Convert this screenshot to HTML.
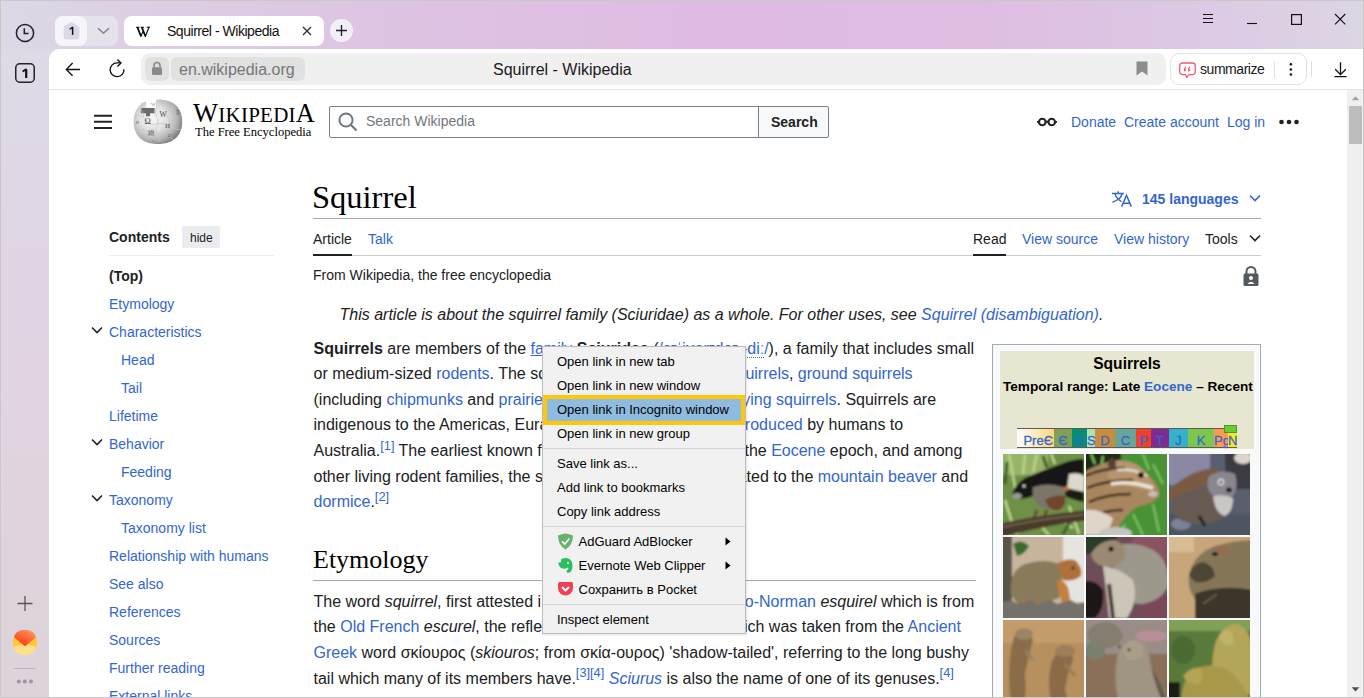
<!DOCTYPE html>
<html><head><meta charset="utf-8">
<style>
*{box-sizing:border-box;margin:0;padding:0}
html,body{width:1364px;height:698px;overflow:hidden;background:#fff}
body{position:relative;font-family:"Liberation Sans",sans-serif;color:#202122}
.a{position:absolute;white-space:nowrap}
#bg{position:absolute;left:0;top:0;width:1364px;height:698px;
 background:linear-gradient(90deg,#dcd9e5 0%,#dccde4 12%,#dec3e3 30%,#dfbbe3 52%,#dfbde3 72%,#dcc9e4 88%,#dcd6e4 100%)}
#side{position:absolute;left:0;top:49px;width:49px;height:649px;
 background:linear-gradient(180deg,#dedae6 0%,#e0d5e2 40%,#dfd4dd 75%,#ddd3da 100%)}
#tool{position:absolute;left:49px;top:49px;width:1315px;height:41px;background:#fff;border-top-left-radius:10px;border-bottom:1px solid #e3e3e3}
#page{position:absolute;left:49px;top:90px;width:1315px;height:608px;background:#fff;overflow:hidden}
.lk{color:#3366cc}
.sb{position:absolute;left:1347px;top:90px;width:16px;height:608px;background:#f0f0f0}
#frame{position:absolute;left:0;top:0;width:1364px;height:698px;border:1px solid #c8c8c8;pointer-events:none}
.toc{position:absolute;font-size:14px;color:#3366cc;line-height:20px}
.p16{position:absolute;font-size:16px;line-height:25.6px;white-space:nowrap;color:#202122}
sup{font-size:12.8px;line-height:1;vertical-align:super;position:relative;top:0}
.menu{position:absolute;left:542px;top:346px;width:204px;height:288px;background:#f1f1f1;border:1px solid #bcbcbc;box-shadow:1px 1px 2px rgba(0,0,0,.12)}
.mi{position:absolute;left:14px;font-size:13px;color:#000;white-space:nowrap;line-height:16px}
.sep{position:absolute;left:0;width:202px;height:1px;background:#d4d4d4}
</style></head>
<body>
<div id="bg"></div>
<div id="side"></div>
<!-- sidebar icons -->
<svg class="a" style="left:14px;top:22px" width="22" height="22" viewBox="0 0 22 22"><circle cx="11" cy="11" r="8.6" fill="none" stroke="#222" stroke-width="1.5"/><path d="M10.3 6.2V11.6H14.6" fill="none" stroke="#222" stroke-width="1.5"/></svg>
<svg class="a" style="left:14px;top:62px" width="22" height="22" viewBox="0 0 22 22"><rect x="1.75" y="1.75" width="18.5" height="18.5" rx="4" fill="none" stroke="#222" stroke-width="1.5"/><path d="M12.2 7.6V16" stroke="#111" stroke-width="2.2"/><path d="M8.6 9.6L12.6 7" stroke="#111" stroke-width="1.8"/></svg>
<svg class="a" style="left:15px;top:594px" width="20" height="20" viewBox="0 0 20 20"><path d="M10 2V17M2.5 9.5H17.5" stroke="#555" stroke-width="1.3"/></svg>
<svg class="a" style="left:12px;top:630px" width="26" height="26" viewBox="0 0 26 26"><defs><linearGradient id="yr" x1="1" y1="0" x2="0.3" y2="1"><stop offset="0" stop-color="#ffa070"/><stop offset="1" stop-color="#ff3a0a"/></linearGradient></defs><circle cx="13" cy="13" r="12.1" fill="#ffc93a"/><path d="M1.6 17.2L13 12.8L24.4 17.2A12.1 12.1 0 0 1 1.6 17.2Z" fill="#ffe08a"/><path d="M1.9 6.9A12.1 12.1 0 0 1 24.1 6.9L14.2 15.6Q13 16.5 11.8 15.6Z" fill="url(#yr)"/></svg>
<div class="a" style="left:14px;top:668px;width:22px;height:1px;background:#b9b3bb"></div>
<svg class="a" style="left:15px;top:678px" width="20" height="8" viewBox="0 0 20 8"><circle cx="3.8" cy="3.6" r="2" fill="#9c979e"/><circle cx="9.8" cy="3.6" r="2" fill="#9c979e"/><circle cx="16" cy="3.6" r="2" fill="#9c979e"/></svg>

<!-- tab strip -->
<div class="a" style="left:55px;top:16px;width:63px;height:30px;border-radius:8px;background:#e6e2ec"></div>
<div class="a" style="left:55px;top:16px;width:32px;height:30px;border-radius:8px;background:#f6f5f9"></div>
<svg class="a" style="left:63px;top:21px" width="17" height="20" viewBox="0 0 17 20"><path d="M8.5 1.2Q9.3 1.2 10 1.7L15.6 5.2Q16.4 5.8 16.4 6.8V15.6A3 3 0 0 1 13.4 18.6H3.6A3 3 0 0 1 0.6 15.6V6.8Q0.6 5.8 1.4 5.2L7 1.7Q7.7 1.2 8.5 1.2Z" fill="#dcd8e6"/><path d="M9.6 6.2V13.9" stroke="#111" stroke-width="1.5"/><path d="M6.6 8.2L9.9 6.1" stroke="#111" stroke-width="1.3"/></svg>
<svg class="a" style="left:97px;top:27px" width="13" height="8" viewBox="0 0 13 8"><path d="M1 1.2L6.5 6.2L12 1.2" fill="none" stroke="#777" stroke-width="1.3"/></svg>
<div class="a" style="left:124px;top:16px;width:200px;height:30px;border-radius:8px;background:#fff"></div>
<svg class="a" style="left:135px;top:26px" width="16" height="11" viewBox="0 0 16 11"><path d="M1 1.3H4.6M5.8 1.3H9M11.6 1.3H15.2M2.2 1.3L6 10.3L8.2 4.8M6.7 1.3L10.4 10.3L14 1.3" fill="none" stroke="#111" stroke-width="1.1"/><path d="M2.4 1.3L6 10.3M6.9 1.3L10.4 10.3" fill="none" stroke="#111" stroke-width="1.7"/></svg>
<div class="a" style="left:167px;top:23.2px;font-size:14px;line-height:16px;color:#111;letter-spacing:-0.47px">Squirrel - Wikipedia</div>
<svg class="a" style="left:302px;top:26px" width="10" height="10" viewBox="0 0 10 10"><path d="M1 1L9 9M9 1L1 9" stroke="#2a2a2a" stroke-width="1.25"/></svg>
<div class="a" style="left:330px;top:19px;width:23px;height:23px;border-radius:50%;background:#f3eff6"></div>
<svg class="a" style="left:335px;top:24px" width="13" height="13" viewBox="0 0 13 13"><path d="M6.5 1V12M1 6.5H12" stroke="#1e2430" stroke-width="1.4"/></svg>
<!-- window controls -->
<svg class="a" style="left:1200px;top:10px" width="150" height="18" viewBox="1200 10 150 18">
<path d="M1203 14.5H1213M1203 18.5H1213M1203 22.5H1213" stroke="#111" stroke-width="1.1"/>
<path d="M1247 23.5H1257" stroke="#111" stroke-width="1.1"/>
<rect x="1291.6" y="14.6" width="9.8" height="9.8" fill="none" stroke="#111" stroke-width="1.2"/>
<path d="M1335 14L1345.3 24.3M1345.3 14L1335 24.3" stroke="#111" stroke-width="1.1"/>
</svg>
<!-- toolbar -->
<div id="tool"></div>
<svg class="a" style="left:64px;top:61px" width="18" height="16" viewBox="0 0 18 16"><path d="M16 8.5H2.6M8.6 2L2.3 8.5L8.6 14.8" fill="none" stroke="#111" stroke-width="1.35"/></svg>
<svg class="a" style="left:108px;top:56px" width="18" height="24" viewBox="0 0 18 24"><path d="M15.9 13.2A6.9 6.9 0 1 1 9.2 6.9H12.6" fill="none" stroke="#111" stroke-width="1.35"/><path d="M9.4 3.6L13 7L9.4 10.4" fill="none" stroke="#111" stroke-width="1.35"/></svg>
<div class="a" style="left:141px;top:53px;width:1025px;height:32px;border-radius:9px;background:#f0f0f0"></div>
<div class="a" style="left:145px;top:57px;width:24px;height:24px;border-radius:6px;background:#e1e1e1"></div>
<svg class="a" style="left:151px;top:61px" width="12" height="15" viewBox="0 0 12 15"><path d="M3 6.5V4.5A3 3 0 0 1 9 4.5V6.5" fill="none" stroke="#8a8a8a" stroke-width="1.6"/><rect x="1" y="6.3" width="10" height="7.7" rx="1.2" fill="#8a8a8a"/></svg>
<div class="a" style="left:171px;top:57px;width:134px;height:24px;border-radius:6px;background:#e1e1e1"></div>
<div class="a" style="left:179px;top:60.5px;font-size:16px;line-height:18px;color:#767676">en.wikipedia.org</div>
<div class="a" style="left:493px;top:61px;font-size:16px;line-height:18px;color:#1a1a1a">Squirrel - Wikipedia</div>
<svg class="a" style="left:1136px;top:61px" width="12" height="15" viewBox="0 0 12 15"><path d="M0.5 0.5H11.5V14.5L6 10.5L0.5 14.5Z" fill="#8c8c8c"/></svg>
<div class="a" style="left:1170px;top:53px;width:137px;height:32px;border-radius:9px;border:1px solid #e2e2e2;background:#fff"></div>
<svg class="a" style="left:1179px;top:62px" width="18" height="17" viewBox="0 0 18 17"><path d="M3.5 1H13.5A2.8 2.8 0 0 1 16.3 3.8V9.8A2.8 2.8 0 0 1 13.5 12.6H10.2L7.6 15.3L6.6 12.6H3.5A2.8 2.8 0 0 1 0.7 9.8V3.8A2.8 2.8 0 0 1 3.5 1Z" fill="none" stroke="#f25a6e" stroke-width="1.3"/><path d="M5.2 9.2Q4.2 6.2 6.8 4.6L7.2 5.3Q6.2 6.2 6.6 7.2Q7.6 7.6 7.2 8.6Q6.4 9.8 5.2 9.2ZM9.2 9.2Q8.2 6.2 10.8 4.6L11.2 5.3Q10.2 6.2 10.6 7.2Q11.6 7.6 11.2 8.6Q10.4 9.8 9.2 9.2Z" fill="#f25a6e"/></svg>
<div class="a" style="left:1200px;top:60.5px;font-size:14px;line-height:17px;color:#1a1a1a;letter-spacing:-0.45px">summarize</div>
<div class="a" style="left:1274px;top:61px;width:1px;height:17px;background:#e0e0e0"></div>
<svg class="a" style="left:1287px;top:60px" width="8" height="18" viewBox="0 0 8 18"><circle cx="3.9" cy="4.2" r="1.25" fill="#111"/><circle cx="3.9" cy="9.4" r="1.25" fill="#111"/><circle cx="3.9" cy="14.6" r="1.25" fill="#111"/></svg>
<div class="a" style="left:1311px;top:61px;width:1px;height:16px;background:#e0e0e0"></div>
<svg class="a" style="left:1332px;top:60px" width="17" height="19" viewBox="0 0 17 19"><path d="M8.5 2.3V14.5M3.2 9.3L8.5 14.6L13.8 9.3M2.5 16.6H14.6" fill="none" stroke="#111" stroke-width="1.3"/></svg>

<!-- page -->
<div id="page"></div>
<div id="wiki">
<!-- header -->
<svg class="a" style="left:93px;top:114px" width="20" height="16" viewBox="0 0 20 16"><path d="M1 1.8H19M1 7.8H19M1 13.9H19" stroke="#202122" stroke-width="2"/></svg>
<svg class="a" style="left:130px;top:94px" width="56" height="56" viewBox="0 0 56 56"><defs><radialGradient id="gl" cx="0.4" cy="0.42" r="0.62"><stop offset="0" stop-color="#f6f6f6"/><stop offset="0.45" stop-color="#e2e2e2"/><stop offset="0.8" stop-color="#b4b4b4"/><stop offset="1" stop-color="#828282"/></radialGradient></defs>
<path d="M3.6 27.9C3.6 13.8 12.4 5.6 27.9 5.6C43.4 5.6 52.2 13.8 52.2 27.9C52.2 41.6 43 49.9 27.9 49.9C12.8 49.9 3.6 41.6 3.6 27.9Z" fill="url(#gl)"/>
<path d="M16 3Q21 2.5 27 3.5L26.5 13.8H16.2Z" fill="#fff"/>
<path d="M10.8 14H24.5V19.2H20V22.2H16V19.2H10.8Z" fill="#6b6b6b"/>
<path d="M26.5 6V14Q24 20 27 24Q30 30 25 34Q28 40 30 48M5 22Q12 20 16 26T26 30Q34 28 40 32T51 36M9 36Q16 34 20 40M38 10Q34 18 38 24T36 38Q40 44 44 46M12 8Q10 16 14 22" fill="none" stroke="#c4c4c4" stroke-width="0.7"/>
<text x="14.6" y="29.8" font-family="Liberation Serif" font-size="8.5" fill="#3c3c3c">Ω</text>
<text x="29.6" y="23" font-family="Liberation Serif" font-size="7.5" fill="#4a4a4a">W</text>
<text x="35" y="33.8" font-family="Liberation Serif" font-size="7" fill="#4a4a4a">И</text>
<text x="17.5" y="40.5" font-family="Liberation Serif" font-size="6.5" fill="#5a5a5a">維</text>
<text x="45.5" y="19" font-family="Liberation Serif" font-size="6" fill="#5a5a5a">ვ</text>
<text x="37.5" y="43" font-family="Liberation Serif" font-size="5.5" fill="#5a5a5a">ש</text>
<text x="5.5" y="30" font-family="Liberation Serif" font-size="5" fill="#777">Й</text>
<text x="21" y="12" font-family="Liberation Serif" font-size="5" fill="#888">W</text>
<text x="22" y="49" font-family="Liberation Serif" font-size="4.5" fill="#888">ก</text>
</svg>
<div class="a" style="left:193px;top:99.6px;font-family:'Liberation Serif',serif;color:#000;line-height:27px;font-size:26.5px;letter-spacing:0.25px">W<span style="font-size:21px">IKIPEDI</span>A</div>
<div class="a" style="left:195px;top:124px;font-family:'Liberation Serif',serif;color:#000;line-height:16px;font-size:12.55px">The Free Encyclopedia</div>
<div class="a" style="left:329px;top:106px;width:430px;height:32px;border:1px solid #7a7f85;border-radius:2px 0 0 2px;background:#fff"></div>
<svg class="a" style="left:337px;top:111px" width="22" height="22" viewBox="0 0 22 22"><circle cx="9" cy="9" r="6.6" fill="none" stroke="#72777d" stroke-width="2"/><path d="M13.8 13.8L19.5 19.5" stroke="#72777d" stroke-width="2.2"/></svg>
<div class="a" style="left:366px;top:110.9px;font-size:14px;line-height:20px;color:#72777d">Search Wikipedia</div>
<div class="a" style="left:758px;top:106px;width:71px;height:32px;border:1px solid #7a7f85;border-radius:0 2px 2px 0;background:#f8f9fa"></div>
<div class="a" style="left:771px;top:111.75px;font-size:14px;line-height:20px;color:#202122;font-weight:bold">Search</div>
<svg class="a" style="left:1036px;top:115px" width="22" height="14" viewBox="0 0 22 14"><circle cx="6.3" cy="7" r="3.3" fill="none" stroke="#202122" stroke-width="2.1"/><circle cx="15.7" cy="7" r="3.3" fill="none" stroke="#202122" stroke-width="2.1"/><path d="M9.5 6.6H12.5M1 6.8H3M19 6.8H21" stroke="#202122" stroke-width="1.8"/></svg>
<div class="a" style="left:1071px;top:111.75px;font-size:14px;line-height:20px;color:#3366cc">Donate</div>
<div class="a" style="left:1124px;top:111.75px;font-size:14px;line-height:20px;color:#3366cc">Create account</div>
<div class="a" style="left:1227px;top:111.75px;font-size:14px;line-height:20px;color:#3366cc">Log in</div>
<svg class="a" style="left:1278px;top:118px" width="22" height="8" viewBox="0 0 22 8"><circle cx="3.5" cy="4" r="2.3" fill="#202122"/><circle cx="11" cy="4" r="2.3" fill="#202122"/><circle cx="18.5" cy="4" r="2.3" fill="#202122"/></svg>

<!-- TOC -->
<div class="a" style="left:109px;top:227.05px;font-size:14px;line-height:20px;font-weight:bold;color:#202122">Contents</div>
<div class="a" style="left:182px;top:226px;width:38px;height:22px;background:#eaecf0;border-radius:2px"></div>
<div class="a" style="left:190px;top:228.5px;font-size:12px;line-height:18px;color:#202122">hide</div>
<div class="a" style="left:109px;top:255px;width:165px;height:1px;background:#eaecf0"></div>
<div class="a" style="left:109px;top:266.25px;font-size:14px;line-height:20px;font-weight:bold;color:#202122">(Top)</div>
<div class="toc" style="left:109px;top:294.25px">Etymology</div>
<div class="toc" style="left:109px;top:322.25px">Characteristics</div>
<div class="toc" style="left:121px;top:350.25px">Head</div>
<div class="toc" style="left:121px;top:378.25px">Tail</div>
<div class="toc" style="left:109px;top:406.25px">Lifetime</div>
<div class="toc" style="left:109px;top:434.25px">Behavior</div>
<div class="toc" style="left:121px;top:462.25px">Feeding</div>
<div class="toc" style="left:109px;top:490.25px">Taxonomy</div>
<div class="toc" style="left:121px;top:518.25px">Taxonomy list</div>
<div class="toc" style="left:109px;top:546.25px">Relationship with humans</div>
<div class="toc" style="left:109px;top:574.25px">See also</div>
<div class="toc" style="left:109px;top:602.25px">References</div>
<div class="toc" style="left:109px;top:630.25px">Sources</div>
<div class="toc" style="left:109px;top:658.25px">Further reading</div>
<div class="toc" style="left:109px;top:686.25px">External links</div>
<svg class="a" style="left:91px;top:326px" width="12" height="9" viewBox="0 0 12 9"><path d="M1 1.5L6 6.5L11 1.5" fill="none" stroke="#202122" stroke-width="1.6"/></svg>
<svg class="a" style="left:91px;top:438px" width="12" height="9" viewBox="0 0 12 9"><path d="M1 1.5L6 6.5L11 1.5" fill="none" stroke="#202122" stroke-width="1.6"/></svg>
<svg class="a" style="left:91px;top:494px" width="12" height="9" viewBox="0 0 12 9"><path d="M1 1.5L6 6.5L11 1.5" fill="none" stroke="#202122" stroke-width="1.6"/></svg>

<!-- title -->
<div class="a" style="left:312px;top:176.8px;font-family:'Liberation Serif',serif;font-size:32.5px;line-height:40px;color:#000">Squirrel</div>
<svg class="a" style="left:1110px;top:190px" width="23" height="18" viewBox="0 0 23 18"><path d="M8.1 1.2V3.5M2 3.5H13.8M4.7 3.5Q6 7.5 8.3 9.2Q9.8 10.6 11.5 11.6M12.2 3.5Q10.8 8 8.3 9.2Q6 10.8 2.4 12.3" fill="none" stroke="#3366cc" stroke-width="1.4"/><path d="M11.7 16.6L16.5 5.3L21.3 16.6M13.3 13.2H19.8" fill="none" stroke="#3366cc" stroke-width="1.5"/></svg>
<div class="a" style="left:1142px;top:188.55px;font-size:14px;line-height:20px;color:#3366cc;font-weight:bold">145 languages</div>
<svg class="a" style="left:1249px;top:194px" width="12" height="9" viewBox="0 0 12 9"><path d="M1 1.5L6 6.5L11 1.5" fill="none" stroke="#3366cc" stroke-width="1.6"/></svg>
<div class="a" style="left:313px;top:218px;width:948px;height:1px;background:#a2a9b1"></div>
<div class="a" style="left:313px;top:228.95px;font-size:14px;line-height:20px;color:#202122">Article</div>
<div class="a" style="left:368px;top:228.95px;font-size:14px;line-height:20px;color:#3366cc">Talk</div>
<div class="a" style="left:973px;top:228.95px;font-size:14px;line-height:20px;color:#202122">Read</div>
<div class="a" style="left:1022px;top:228.95px;font-size:14px;line-height:20px;color:#3366cc">View source</div>
<div class="a" style="left:1114px;top:228.95px;font-size:14px;line-height:20px;color:#3366cc">View history</div>
<div class="a" style="left:1205px;top:228.95px;font-size:14px;line-height:20px;color:#202122">Tools</div>
<svg class="a" style="left:1249px;top:234px" width="12" height="9" viewBox="0 0 12 9"><path d="M1 1.5L6 6.5L11 1.5" fill="none" stroke="#202122" stroke-width="1.6"/></svg>
<div class="a" style="left:313px;top:255px;width:948px;height:1px;background:#c8ccd1"></div>
<div class="a" style="left:313px;top:254px;width:39px;height:2px;background:#202122"></div>
<div class="a" style="left:973px;top:254px;width:33px;height:2px;background:#202122"></div>
<div class="a" style="left:313px;top:264.95px;font-size:14px;line-height:20px;color:#202122">From Wikipedia, the free encyclopedia</div>
<svg class="a" style="left:1242px;top:265px" width="18" height="22" viewBox="0 0 18 22"><path d="M4.5 9V6.5A4.5 4.5 0 0 1 13.5 6.5V9" fill="none" stroke="#54595d" stroke-width="2"/><rect x="1.5" y="8.5" width="15" height="12.5" rx="1.5" fill="#54595d"/><circle cx="9" cy="13" r="2" fill="#fff"/><path d="M5.5 19Q9 14.5 12.5 19Z" fill="#fff"/></svg>
<!-- body -->
<div class="p16" style="left:339.5px;top:302.26px;font-style:italic">This article is about the squirrel family (Sciuridae) as a whole. For other uses, see <span class="lk">Squirrel (disambiguation)</span>.</div>
<div class="p16" style="left:313.5px;top:335.65px"><b>Squirrels</b> are members of the <span class="lk" style="text-decoration:underline">family</span> <b>Sciuridae</b> (<span class="lk">/sɪˈjʊərɪdeɪ, </span></div>
<div class="p16" style="right:390px;top:335.65px"><span class="lk"><span style="border-bottom:1px dotted #3366cc;display:inline-block;line-height:17px">-diː</span>/</span>), a family that includes small</div>
<div class="p16" style="left:313.5px;top:361.25px">or medium-sized <span class="lk">rodents</span>. The squirrel family includes <span class="lk">tree squirrels</span>, <span class="lk">ground squirrels</span></div>
<div class="p16" style="left:313.5px;top:386.85px">(including <span class="lk">chipmunks</span> and <span class="lk">prairie dogs</span>, among others), and <span class="lk">flying squirrels</span>. Squirrels are</div>
<div class="p16" style="left:313.5px;top:412.45px">indigenous to the Americas, Eurasia, and Africa, and were <span class="lk">introduced</span> by humans to</div>
<div class="p16" style="left:313.5px;top:438.05px">Australia.<sup class="lk">[1]</sup> The earliest known fossil squirrels date from</div>
<div class="p16" style="right:401.6px;top:438.05px">the <span class="lk">Eocene</span> epoch, and among</div>
<div class="p16" style="left:313.5px;top:463.65px">other living rodent families, the squirrels are most closely related to the <span class="lk">mountain beaver</span> and</div>
<div class="p16" style="left:313.5px;top:489.25px"><span class="lk">dormice</span>.<sup class="lk">[2]</sup></div>

<div class="a" style="left:313px;top:543.6px;font-family:'Liberation Serif',serif;font-size:26px;line-height:32px;color:#000">Etymology</div>
<div class="a" style="left:313px;top:580px;width:663px;height:1px;background:#a2a9b1"></div>
<div class="p16" style="left:313.5px;top:588.86px">The word <i>squirrel</i>, first attested in 1327, comes from the <span class="lk">Anglo-Norman</span> <i>esquirel</i> which is from</div>
<div class="p16" style="left:313.5px;top:614.46px">the <span class="lk">Old French</span> <i>escurel</i>, the reflex of a Latin word <i>sciurus</i>, which was taken from the <span class="lk">Ancient</span></div>
<div class="p16" style="left:313.5px;top:640.06px"><span class="lk">Greek</span> word σκίουρος (<i>skiouros</i>; from σκία-ουρος) 'shadow-tailed', referring to the long bushy</div>
<div class="p16" style="left:313.5px;top:665.66px">tail which many of its members have.<sup class="lk">[3]</sup><sup class="lk">[4]</sup> <i class="lk">Sciurus</i> is also the name of one of its genuses.<sup class="lk">[4]</sup></div>

<!-- infobox -->
<div class="a" style="left:992px;top:344px;width:269px;height:360px;border:1px solid #a2a9b1;background:#f8f9fa"></div>
<div class="a" style="left:1000px;top:351px;width:254px;height:98px;background:#e7e7d1"></div>
<div class="a" style="left:1000px;top:354.4px;width:254px;text-align:center;font-size:15.6px;line-height:20px;font-weight:bold;color:#000">Squirrels</div>
<div class="a" style="left:1003px;top:376.59px;font-size:13.6px;line-height:20px;font-weight:bold;color:#000">Temporal range: Late <span class="lk">Eocene</span> – Recent</div>
<div class="a" style="left:1017px;top:428px;width:220px;height:20px;background:#e7e7d1"></div>
<div id="geo" class="a" style="left:1017px;top:428px;height:20px;display:flex;border-top:1px solid #5a5a5a;border-bottom:1px solid #5a5a5a;font-size:13px;line-height:17px;padding-top:0;color:#3366cc;-webkit-text-stroke:0.3px #3366cc">
<div style="width:37px;background:linear-gradient(90deg,#fff,#fdd57a);text-align:right;padding-right:1px;padding-top:2.5px">PreЄ</div>
<div style="width:18px;background:#7fa056;text-align:center;padding-top:2.5px">Є</div>
<div style="width:15px;background:#009270;text-align:center;padding-top:2.5px">O</div>
<div style="width:8px;background:#b3e1b6;text-align:center;padding-top:2.5px">S</div>
<div style="width:20px;background:#cb8c37;text-align:center;padding-top:2.5px">D</div>
<div style="width:21px;background:#67a599;text-align:center;padding-top:2.5px">C</div>
<div style="width:15px;background:#f04028;text-align:center;padding-top:2.5px">P</div>
<div style="width:18px;background:#812b92;text-align:center;padding-top:2.5px">T</div>
<div style="width:19px;background:#34b2c9;text-align:center;padding-top:2.5px">J</div>
<div style="width:26px;background:#7fc64e;text-align:center;padding-top:2.5px">K</div>
<div style="width:14px;background:#fd9a52;text-align:left;overflow:visible;padding-top:2.5px">Pg</div>
<div style="width:9px;background:#ffe619;text-align:left;padding-top:2.5px">N</div>
</div>
<div class="a" style="left:1224px;top:425px;width:13px;height:8px;background:#66cc33;border:1px solid #4a9a22"></div>
<!-- photo grid -->
<svg class="a" style="left:1003px;top:454px" width="248" height="244" viewBox="0 0 248 244">
<defs>
<filter id="bl" x="-5%" y="-5%" width="110%" height="110%"><feGaussianBlur stdDeviation="1.2"/></filter>
<clipPath id="c1"><rect x="0" y="0" width="81" height="81"/></clipPath>
<clipPath id="c2"><rect x="83" y="0" width="81" height="81"/></clipPath>
<clipPath id="c3"><rect x="166" y="0" width="81" height="81"/></clipPath>
<clipPath id="c4"><rect x="0" y="83" width="81" height="81"/></clipPath>
<clipPath id="c5"><rect x="83" y="83" width="81" height="81"/></clipPath>
<clipPath id="c6"><rect x="166" y="83" width="81" height="81"/></clipPath>
<clipPath id="c7"><rect x="0" y="166" width="81" height="81"/></clipPath>
<clipPath id="c8"><rect x="83" y="166" width="81" height="81"/></clipPath>
<clipPath id="c9"><rect x="166" y="166" width="81" height="81"/></clipPath>
</defs>
<g clip-path="url(#c1)"><g filter="url(#bl)">
<rect x="-5" y="-5" width="95" height="95" fill="#6e9046"/>
<rect x="-5" y="-5" width="50" height="26" fill="#98b468"/>
<path d="M6 0L14 44M22 0L20 20M34 0L30 18M48 0L52 10M2 46L10 72M66 52L76 80M36 70L46 81M58 66L70 74M12 80L30 70" stroke="#b8d488" stroke-width="2.6"/>
<path d="M4 8L2 30M40 2L44 14M70 62L60 80" stroke="#3e5a28" stroke-width="3"/>
<path d="M9 41Q12 30 22 24Q40 16 58 10Q70 5 81 5V27Q66 33 52 34Q38 34 30 42Q22 46 12 44Z" fill="#141414"/>
<ellipse cx="14" cy="42" rx="5" ry="3" fill="#9a9a94"/>
<circle cx="21" cy="32" r="1.6" fill="#ddd"/>
<path d="M30 33Q45 28 60 33Q64 44 58 54Q44 58 34 50Q28 42 30 33Z" fill="#7c766a"/>
<path d="M42 46Q52 40 62 42Q64 52 56 56Q46 58 42 46Z" fill="#70452c"/>
<path d="M66 20Q76 18 81 22V38Q72 36 64 34Z" fill="#dcd8cc"/>
<path d="M62 34Q72 36 81 38V48Q70 46 62 42Z" fill="#1e1a18"/>
<ellipse cx="63" cy="35" rx="3" ry="2" fill="#b86a3a"/>
<path d="M34 56L30 66M44 56L40 66" stroke="#6a4630" stroke-width="3"/>
<path d="M-5 70Q30 62 85 56V66Q40 72 -5 84Z" fill="#4a3a2a"/>
<path d="M-5 74Q30 66 85 60" stroke="#7a6a56" stroke-width="1.5" fill="none"/>
</g></g>
<g clip-path="url(#c2)"><g filter="url(#bl)">
<rect x="78" y="-5" width="95" height="95" fill="#4a9234"/>
<rect x="78" y="-5" width="40" height="24" fill="#1e2a18"/>
<path d="M88 0L92 10M100 2L98 14M140 0L146 16M150 10L160 30M130 60L140 81M150 50L156 78M122 70L118 81" stroke="#7ac060" stroke-width="2.2"/>
<path d="M78 20Q96 8 116 6Q134 8 148 24Q158 34 156 42Q150 50 136 52Q120 60 112 81H78Z" fill="#a88660"/>
<path d="M108 8Q124 4 136 12Q146 20 152 34Q144 38 132 34Q116 30 104 24Z" fill="#b89470"/>
<path d="M82 22Q100 14 122 14M84 34Q104 26 130 26M86 48Q104 40 128 40M90 62Q104 56 120 56" stroke="#3e2a1a" stroke-width="2.6" fill="none"/>
<path d="M108 30Q126 26 150 34" stroke="#efe6d4" stroke-width="3.5" fill="none"/>
<path d="M114 16Q130 14 144 22" stroke="#e6dccc" stroke-width="2.5" fill="none"/>
<ellipse cx="109" cy="10" rx="4" ry="6" fill="#5a4030"/>
<circle cx="138" cy="21" r="3" fill="#0e0e0e"/>
<ellipse cx="150" cy="40" rx="5" ry="3" fill="#c8beb0"/>
<path d="M82 56Q96 54 110 64Q106 80 96 81H82Z" fill="#ded6c8"/>
<ellipse cx="113" cy="79" rx="16" ry="6" fill="#c4c4c0"/>
</g></g>
<g clip-path="url(#c3)"><g filter="url(#bl)">
<rect x="161" y="-5" width="95" height="95" fill="#5a5e6e"/>
<rect x="161" y="-5" width="46" height="36" fill="#8a88a2"/>
<rect x="222" y="-5" width="30" height="40" fill="#3a3a42"/>
<ellipse cx="240" cy="4" rx="9" ry="6" fill="#dcd4cc"/>
<rect x="161" y="60" width="95" height="30" fill="#4e5464"/>
<ellipse cx="178" cy="70" rx="10" ry="6" fill="#7a8296"/>
<path d="M166 36Q180 22 200 16Q214 12 222 20Q212 30 196 34Q180 40 166 46Z" fill="#7a5a42"/>
<path d="M170 44Q190 34 210 34Q226 40 222 62Q210 72 190 70Q172 66 168 56Z" fill="#665a52"/>
<path d="M206 22Q220 14 232 20Q236 32 230 42Q218 46 208 40Q202 32 206 22Z" fill="#8a8690"/>
<circle cx="218" cy="28" r="3.2" fill="#e8e4e0"/>
<circle cx="218" cy="28" r="1.6" fill="#1a1a1a"/>
<ellipse cx="226" cy="36" rx="3" ry="2.5" fill="#1a1a1a"/>
<path d="M210 42Q222 40 230 44Q230 58 222 62Q212 60 210 42Z" fill="#cac6c4"/>
<path d="M196 62L202 72" stroke="#1e1e22" stroke-width="3"/>
</g></g>
<g clip-path="url(#c4)"><g filter="url(#bl)">
<rect x="-5" y="78" width="95" height="95" fill="#c6b49e"/>
<rect x="60" y="78" width="30" height="70" fill="#e6e4e0"/>
<rect x="-5" y="78" width="14" height="70" fill="#5a5448"/>
<path d="M10 90Q18 84 26 92Q22 100 14 102Z" fill="#3a6a2e"/>
<path d="M8 140Q6 116 22 110Q42 104 56 110Q62 126 56 144Q36 152 14 150Z" fill="#8a7a5c"/>
<path d="M54 110Q62 104 72 106Q80 114 78 122Q70 128 60 126Z" fill="#b0703a"/>
<circle cx="70" cy="114" r="1.5" fill="#1a1a1a"/>
<path d="M54 126Q64 126 66 138L68 150H60L56 140Z" fill="#c4803c"/>
<path d="M20 146L24 152M34 148L40 154" stroke="#b07a40" stroke-width="3"/>
<path d="M-5 150L8 146L14 150L28 146L34 150L48 146L54 150L68 146L74 150L85 147V170H-5Z" fill="#76706a"/>
</g></g>
<g clip-path="url(#c5)"><g filter="url(#bl)">
<rect x="78" y="78" width="95" height="95" fill="#6e4e58"/>
<rect x="78" y="78" width="36" height="22" fill="#2c3a28"/>
<path d="M128 84Q150 78 168 84V110Q150 104 130 96Z" fill="#8a5262"/>
<rect x="136" y="142" width="36" height="30" fill="#7a4658"/>
<path d="M110 92Q130 86 150 96Q166 106 166 130Q160 146 140 150Q120 150 110 136Z" fill="#9c988c"/>
<path d="M88 100Q96 86 112 86Q124 90 122 104Q114 116 100 112Q90 110 88 100Z" fill="#9a8a72"/>
<circle cx="108" cy="95" r="2.5" fill="#111"/>
<path d="M100 112Q116 114 130 126Q136 146 124 164H106Q104 140 100 112Z" fill="#ccc6b8"/>
<path d="M106 130L110 164" stroke="#4a3a30" stroke-width="4"/>
<path d="M78 128Q92 124 100 136Q102 156 92 164H78Z" fill="#1e1616"/>
</g></g>
<g clip-path="url(#c6)"><g filter="url(#bl)">
<rect x="161" y="78" width="95" height="95" fill="#c8a67a"/>
<rect x="161" y="78" width="30" height="20" fill="#d8bc94"/>
<path d="M186 122Q190 100 212 92Q232 86 250 86V150H196Q184 138 186 122Z" fill="#867658"/>
<path d="M186 122Q188 110 200 108Q210 110 212 122Q204 130 192 128Z" fill="#4e4434"/>
<ellipse cx="212" cy="100" rx="3" ry="2" fill="#1e1a14"/>
<ellipse cx="220" cy="96" rx="5" ry="4" fill="#9a6a48"/>
<path d="M192 140Q216 130 250 136V170H192Z" fill="#3a342a"/>
<path d="M200 150L214 140" stroke="#6a5e4a" stroke-width="2"/>
</g></g>
<g clip-path="url(#c7)"><g filter="url(#bl)">
<rect x="-5" y="161" width="95" height="95" fill="#b8905e"/>
<rect x="-5" y="161" width="95" height="28" fill="#c29c6a"/>
<path d="M8 250Q4 220 8 196Q10 182 16 176Q26 176 30 186Q26 200 22 220Q24 240 20 250Z" fill="#8a6c4a"/>
<ellipse cx="21" cy="180" rx="9" ry="6" fill="#9c8466"/>
<path d="M22 196L30 206" stroke="#9a7e5e" stroke-width="3"/>
<path d="M48 250Q44 226 48 210Q52 198 60 194Q70 196 70 206Q64 220 62 236Q66 248 64 250Z" fill="#8a6a46"/>
<ellipse cx="62" cy="197" rx="10" ry="6" fill="#9c7e5a"/>
<path d="M62 210L72 222" stroke="#9a7c58" stroke-width="3"/>
</g></g>
<g clip-path="url(#c8)"><g filter="url(#bl)">
<rect x="78" y="161" width="95" height="95" fill="#9a8c86"/>
<rect x="78" y="200" width="95" height="55" fill="#8a7058"/>
<ellipse cx="148" cy="182" rx="16" ry="6" fill="#b88e98"/>
<ellipse cx="92" cy="196" rx="10" ry="10" fill="#7a8070"/>
<path d="M84 180Q88 168 104 168Q118 170 120 184Q112 196 98 194Q86 192 84 180Z" fill="#847e6e"/>
<path d="M114 190Q130 196 148 214Q160 232 164 250H144Z" fill="#5e5a50"/>
<path d="M116 250Q110 226 114 204Q116 190 128 186Q144 186 146 200Q148 220 160 250Z" fill="#a09482"/>
<path d="M120 198Q122 186 132 186Q142 190 140 200Q134 208 124 206Z" fill="#aa9e8a"/>
<circle cx="126" cy="196" r="1.4" fill="#222"/>
</g></g>
<g clip-path="url(#c9)"><g filter="url(#bl)">
<rect x="161" y="161" width="95" height="95" fill="#5a7a3a"/>
<rect x="161" y="161" width="95" height="16" fill="#80a058"/>
<ellipse cx="180" cy="196" rx="12" ry="14" fill="#4a6a30"/>
<path d="M212 250Q206 216 212 190Q218 172 232 170Q246 172 248 190V240Z" fill="#b4a658"/>
<path d="M216 184Q218 176 226 176Q232 180 230 190Q222 194 216 184Z" fill="#c0b26a"/>
<path d="M178 250Q178 228 190 216Q204 208 222 214Q240 226 248 250Z" fill="#a8984a"/>
<path d="M180 222Q188 212 198 214Q202 224 196 230Q186 232 180 222Z" fill="#b4a456"/>
<rect x="161" y="228" width="16" height="20" fill="#1e1e12"/>
</g></g>
</svg>
</div>

<!-- context menu -->
<div class="menu">
 <div class="mi" style="top:6.5px">Open link in new tab</div>
 <div class="mi" style="top:30.5px">Open link in new window</div>
 <div class="a" style="left:0;top:48px;width:202px;height:30px;background:#ffc60a"></div>
 <div class="a" style="left:4px;top:52px;width:194px;height:21.5px;background:#8fbbe1"></div>
 <div class="mi" style="top:54.5px">Open link in Incognito window</div>
 <div class="mi" style="top:78.5px">Open link in new group</div>
 <div class="sep" style="top:101px"></div>
 <div class="mi" style="top:108.5px">Save link as...</div>
 <div class="mi" style="top:132.5px">Add link to bookmarks</div>
 <div class="mi" style="top:156.5px">Copy link address</div>
 <div class="sep" style="top:179px"></div>
 <svg class="a" style="left:14px;top:186px" width="17" height="17" viewBox="0 0 17 17"><path d="M8.5 0.5Q12.5 1.2 16 2.5Q16 12 8.5 16.5Q1 12 1 2.5Q4.5 1.2 8.5 0.5Z" fill="#68b26e"/><path d="M5 8.3L7.8 11L12.3 5.5" fill="none" stroke="#fff" stroke-width="1.6"/></svg>
 <div class="mi" style="left:35.5px;top:187px">AdGuard AdBlocker</div>
 <svg class="a" style="left:182px;top:190px" width="6" height="9" viewBox="0 0 6 9"><path d="M0.5 0.5L5.5 4.5L0.5 8.5Z" fill="#000"/></svg>
 <svg class="a" style="left:14px;top:210px" width="17" height="17" viewBox="0 0 17 17"><path d="M4 2.5Q8 0 12.5 2Q15.5 4 15.5 9Q15.5 12.5 14 14.5Q12 16.5 10 15.5Q8.5 14 10.5 13Q12 12 11 10.5Q9 12 6 11.5Q3 11 2 8.5L1 6L4 5Z" fill="#2dbe60"/><circle cx="11" cy="6" r="0.9" fill="#fff"/></svg>
 <div class="mi" style="left:35.5px;top:211px">Evernote Web Clipper</div>
 <svg class="a" style="left:182px;top:214px" width="6" height="9" viewBox="0 0 6 9"><path d="M0.5 0.5L5.5 4.5L0.5 8.5Z" fill="#000"/></svg>
 <svg class="a" style="left:14px;top:234px" width="17" height="16" viewBox="0 0 17 16"><path d="M1 2.5Q1 1 2.5 1H14.5Q16 1 16 2.5V7A7.5 7.5 0 0 1 1 7Z" fill="#ef4056"/><path d="M5 6L8.5 9.5L12 6" fill="none" stroke="#fff" stroke-width="2"/></svg>
 <div class="mi" style="left:35.5px;top:235px">Сохранить в Pocket</div>
 <div class="sep" style="top:257px"></div>
 <div class="mi" style="top:265px">Inspect element</div>
</div>

<div class="sb"></div>
<svg class="a" style="left:1350px;top:95px" width="11" height="7" viewBox="0 0 11 7"><path d="M5.5 1.3L9.3 5.3H1.7Z" fill="#a3a3a3"/></svg>
<div class="a" style="left:1349px;top:106px;width:13px;height:38px;background:#bdbdbd"></div>
<svg class="a" style="left:1350px;top:686px" width="11" height="7" viewBox="0 0 11 7"><path d="M1.6 1.2H9.4L5.5 5.6Z" fill="#505050"/></svg>
<div id="frame"></div>
</body></html>
